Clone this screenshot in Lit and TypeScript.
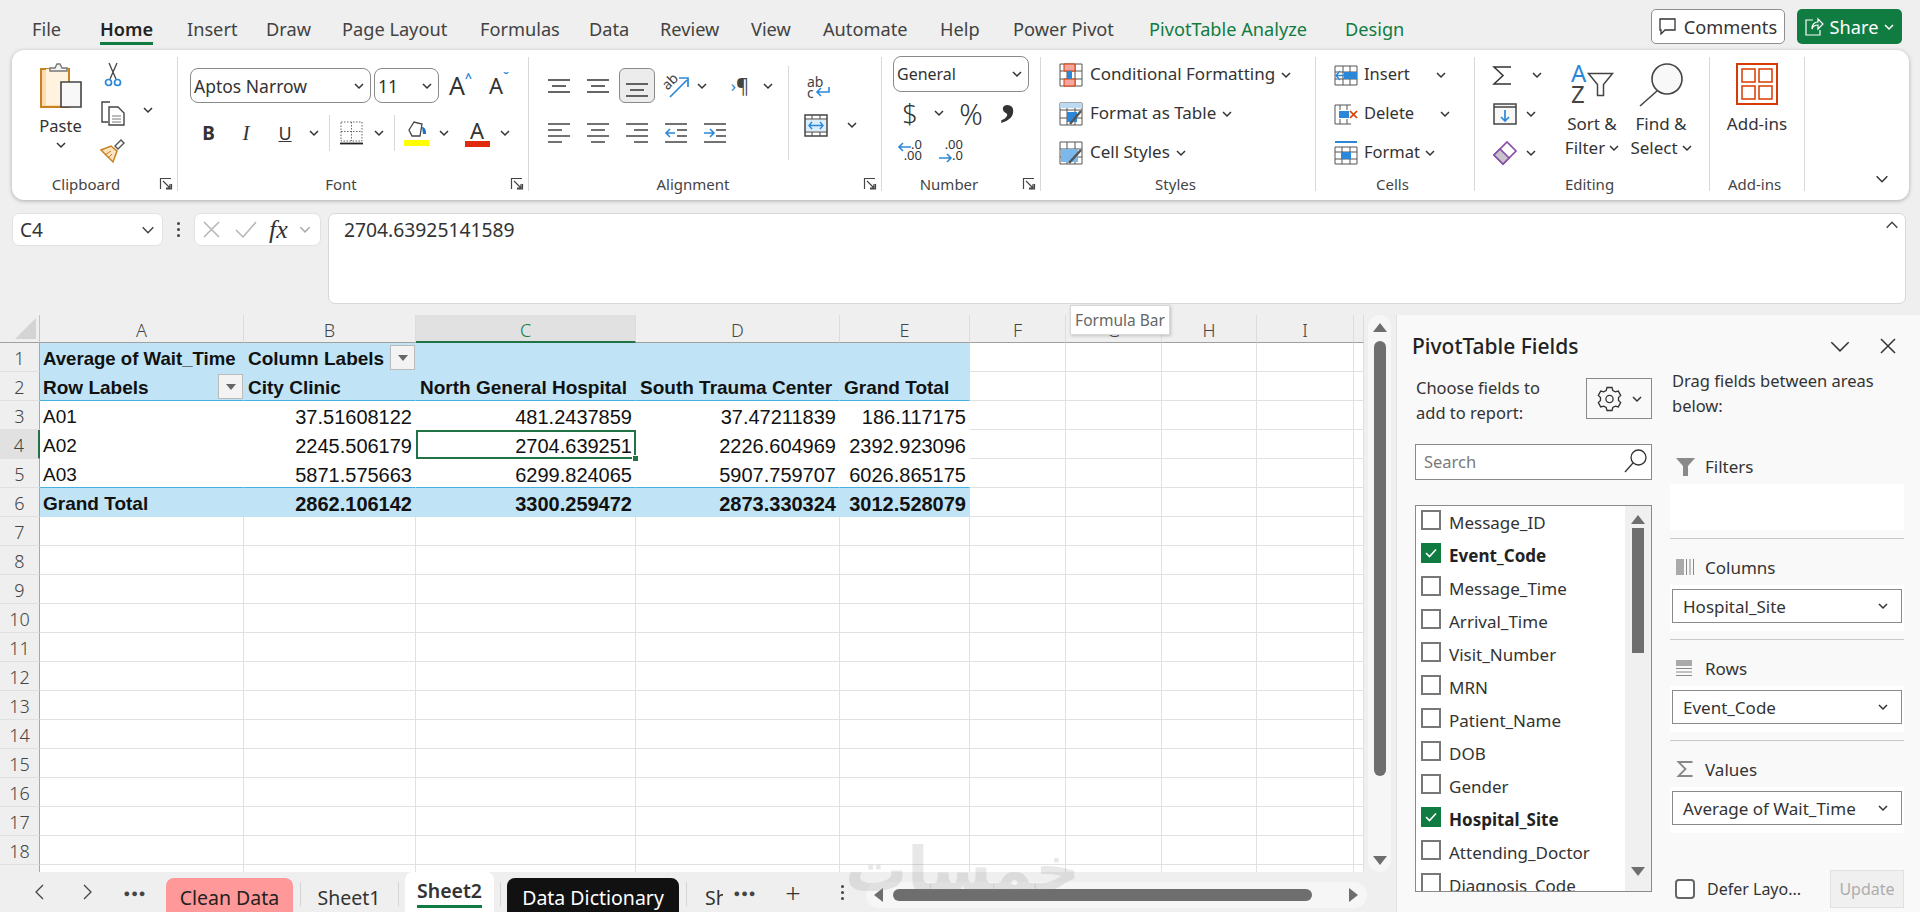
import { LitElement, html, css } from 'lit';
import { customElement } from 'lit/decorators.js';

const chev = (w = 10, color = '#333') =>
  html`<svg class="chev" width=${w} height=${Math.round(w * 0.6)} viewBox="0 0 10 6"><path d="M1 1l4 4 4-4" fill="none" stroke=${color} stroke-width="1.5" vector-effect="non-scaling-stroke"/></svg>`;

const launcher = html`<svg class="launcher" width="12" height="12" viewBox="0 0 12 12"><path d="M.5 11V.5H11M6 11h5.5V6M3 3l7 7M6 10h4V6" fill="none" stroke="#444" stroke-width="1.2"/></svg>`;

const icons = {
  paste: html`<svg width="42" height="46" viewBox="0 0 42 46"><path d="M1 6h28v38H1z" fill="#fddcb0" stroke="#c8811e" stroke-width="2"/><path d="M6 6h22v36H6z" fill="#fff3e0"/><path d="M10 8V5h5l2-4h3l2 4h5v3z" fill="#f4f4f4" stroke="#777" stroke-width="1.4"/><path d="M21 19h20v25H21z" fill="#f8f8f8" stroke="#444" stroke-width="1.6"/></svg>`,
  scissors: html`<svg width="18" height="25" viewBox="0 0 18 25"><path d="M5 1l7 16M13 1L6 17" fill="none" stroke="#444" stroke-width="1.3"/><circle cx="4.500" cy="20.500" r="3" fill="none" stroke="#2b88d8" stroke-width="1.7"/><circle cx="13.500" cy="20.500" r="3" fill="none" stroke="#2b88d8" stroke-width="1.7"/></svg>`,
  copy: html`<svg width="24" height="25" viewBox="0 0 24 25"><path d="M9 1H1v20h6" fill="none" stroke="#444" stroke-width="1.4"/><path d="M8 6h9l6 6v12H8z" fill="#fff" stroke="#444" stroke-width="1.4"/><path d="M11 15h9M11 18h9M11 21h9" stroke="#777"/></svg>`,
  brush: html`<svg width="25" height="24" viewBox="0 0 25 24"><path d="M15 7l6-6 3 3-6 6z" fill="#fff" stroke="#555" stroke-width="1.4"/><path d="M1 11l10-4 6 5-4 11z" fill="#fbe3c2" stroke="#c8811e" stroke-width="1.5"/><path d="M5 16l6-4M8 19l4-4" stroke="#c8811e"/></svg>`,
  borders: html`<svg width="23" height="24" viewBox="0 0 23 24"><path d="M1 1h21v19H1zM11.500 1v19M1 10.500h21" fill="none" stroke="#666" stroke-dasharray="1.500 1.500"/><path d="M0 22.500h23" stroke="#222" stroke-width="1.8"/></svg>`,
  fill: html`<svg width="25" height="26" viewBox="0 0 25 26"><path d="M5 10L10 2l8 2-2 12-8 0z" fill="#fff" stroke="#444" stroke-width="1.3"/><path d="M18 7c3 0 4 3 4 7h-3z" fill="#1b6ec2"/><path d="M0 20h25v6H0z" fill="#ffff00"/></svg>`,
  alignTop: html`<svg width="22" height="14" viewBox="0 0 22 14"><path d="M0 1h22M4 7h14M0 13h22" stroke="#333" stroke-width="1.5"/></svg>`,
  alignC: html`<svg width="22" height="20" viewBox="0 0 22 20"><path d="M0 1h22M4 7h14M0 13h22M4 19h14" stroke="#444" stroke-width="1.500"/></svg>`,
  alignL: html`<svg width="22" height="20" viewBox="0 0 22 20"><path d="M0 1h22M0 7h14M0 13h22M0 19h14" stroke="#444" stroke-width="1.500"/></svg>`,
  alignR: html`<svg width="22" height="20" viewBox="0 0 22 20"><path d="M0 1h22M8 7h14M0 13h22M8 19h14" stroke="#444" stroke-width="1.500"/></svg>`,
  orient: html`<svg width="25" height="26" viewBox="0 0 25 26"><text x="-1" y="13" font-size="14" transform="rotate(-45 7 10)" fill="#444" font-family="Noto Sans">ab</text><path d="M6 24L23 7M15 5h9v9" fill="none" stroke="#2b88d8" stroke-width="1.7"/></svg>`,
  outdent: html`<svg width="22" height="20" viewBox="0 0 22 20"><path d="M0 1h22M12 7h10M12 13h10M0 19h22" stroke="#444" stroke-width="1.500"/><path d="M10 10H1M5 6l-4 4 4 4" fill="none" stroke="#2b88d8" stroke-width="1.600"/></svg>`,
  indent: html`<svg width="22" height="20" viewBox="0 0 22 20"><path d="M0 1h22M12 7h10M12 13h10M0 19h22" stroke="#444" stroke-width="1.500"/><path d="M0 10h9M6 6l4 4-4 4" fill="none" stroke="#2b88d8" stroke-width="1.600"/></svg>`,
  merge: html`<svg width="24" height="23" viewBox="0 0 24 23"><path d="M1 1h22v21H1z" fill="#fff" stroke="#444" stroke-width="1.500"/><path d="M1 5h22M1 18h22M8 1v4M16 1v4M8 18v4M16 18v4" stroke="#444"/><path d="M2 6h20v11H2z" fill="#dbedfb"/><path d="M5 11.500h14M8 8l-3 3.500L8 15M16 8l3 3.500L16 15" fill="none" stroke="#2b88d8" stroke-width="1.400"/></svg>`,
  cf: html`<svg width="24" height="24" viewBox="0 0 24 24"><path d="M1 1h22v22H1zM8 1v22M16 1v22M1 8h22M1 16h22" fill="#fff" stroke="#555"/><path d="M5 1h11v7H5zM5 16h11v7H5z" fill="#f4a6a0" stroke="#d83b01"/><path d="M8 8h5v8H8z" fill="#2b88d8"/></svg>`,
  fat: html`<svg width="24" height="24" viewBox="0 0 24 24"><path d="M1 1h22v22H1zM8 1v22M16 1v22M1 8h22M1 16h22" fill="#fff" stroke="#555"/><path d="M1 1h22v5H1z" fill="#bcd9f2"/><path d="M8 10h10v10H8z" fill="#2b88d8"/><path d="M11 22L22 9" stroke="#555" stroke-width="2.500"/></svg>`,
  cs: html`<svg width="24" height="24" viewBox="0 0 24 24"><path d="M1 1h22v22H1zM8 1v22M16 1v22M1 8h22M1 16h22" fill="#fff" stroke="#555"/><path d="M2 8h17v13H2z" fill="#7cb8ea"/><path d="M10 22L22 9" stroke="#555" stroke-width="2.500"/></svg>`,
  insert: html`<svg width="24" height="21" viewBox="0 0 24 21"><path d="M1 1h22v19H1zM1 7h22M1 14h22M9 1v19M16 1v19" fill="#fff" stroke="#555"/><path d="M10 7h13v7H10z" fill="#2b88d8"/><path d="M12 10.500H2M6 6l-4 4.500L6 15" fill="#fff" stroke="#2b88d8" stroke-width="1.500"/></svg>`,
  del: html`<svg width="24" height="21" viewBox="0 0 24 21"><path d="M1 1h16M1 20h16M1 1v19M6 1v5M13 1v5M6 15v5M13 15v5" fill="none" stroke="#555"/><path d="M5 7h10v7H5z" fill="#2b88d8"/><path d="M16 7l7 7M23 7l-7 7" stroke="#d83b01" stroke-width="1.700"/></svg>`,
  format: html`<svg width="24" height="24" viewBox="0 0 24 24"><path d="M1 1h22" stroke="#2b88d8" stroke-width="2"/><path d="M1 6h22v17H1zM8 6v17M16 6v17M1 11h22M1 18h22" fill="#fff" stroke="#555"/><path d="M7 11h10v7H7z" fill="#2b88d8"/></svg>`,
  sigma: html`<svg width="19" height="19" viewBox="0 0 19 19"><path d="M18 1H1l9 8.500L1 18h17" fill="none" stroke="#333" stroke-width="1.500"/></svg>`,
  filldown: html`<svg width="24" height="22" viewBox="0 0 24 22"><path d="M1 1h22v20H1z" fill="#f8f8f8" stroke="#444" stroke-width="1.500"/><path d="M1 4h22" stroke="#444" stroke-width="1.500"/><path d="M12 7v11M8 14l4 4 4-4" fill="none" stroke="#2b88d8" stroke-width="1.700"/></svg>`,
  eraser: html`<svg width="24" height="24" viewBox="0 0 24 24"><path d="M1 14L14 1l9 9L10 23z" fill="#fff" stroke="#8a4fa8" stroke-width="1.700"/><path d="M1 14l6-6 9 9-6 6z" fill="#c9c4cc" stroke="#8a4fa8" stroke-width="1.700"/></svg>`,
  sort: html`<svg width="43" height="42" viewBox="0 0 43 42"><text x="0" y="19" font-size="24" fill="#2b88d8" font-family="Noto Sans">A</text><text x="0" y="40" font-size="24" fill="#444" font-family="Noto Sans">Z</text><path d="M17.500 10.500h24l-9 11v11h-6v-11z" fill="#fff" stroke="#444" stroke-width="1.500"/></svg>`,
  find: html`<svg width="44" height="44" viewBox="0 0 44 44"><circle cx="28" cy="16" r="15" fill="#f8f8f8" stroke="#444" stroke-width="1.600"/><path d="M18 28L1 43" stroke="#444" stroke-width="1.600"/></svg>`,
  addins: html`<svg width="42" height="42" viewBox="0 0 42 42"><path d="M1 1h40v40H1z" fill="#fff" stroke="#d83b01" stroke-width="2"/><path d="M6 6h13v13H6zM23 6h13v13H23zM6 23h13v13H6zM23 23h13v13H23z" fill="none" stroke="#d83b01" stroke-width="1.500"/></svg>`,
  comment: html`<svg width="17" height="18" viewBox="0 0 17 18"><path d="M1 1h15v11H6l-4 4v-4H1z" fill="none" stroke="#333" stroke-width="1.300"/></svg>`,
  share: html`<svg width="19" height="19" viewBox="0 0 19 19"><path d="M8 3H1v15h14v-5M7 12c0-5 3-7 6-7V2l5 5-5 5V8c-3 0-5 1-6 4z" fill="none" stroke="#fff" stroke-width="1.200"/></svg>`,
  gear: html`<svg width="25" height="25" viewBox="0 0 25 25"><path d="M10 1.500h5l.8 3 2.500 1.400 3-.8 2.400 4.300-2.200 2.200v2.800l2.200 2.200-2.400 4.300-3-.8-2.500 1.400-.8 3h-5l-.8-3-2.500-1.400-3 .8L1.300 16.600l2.200-2.200v-2.800L1.300 9.400l2.400-4.300 3 .8 2.500-1.400z" fill="none" stroke="#333" stroke-width="1.300"/><circle cx="12.500" cy="13" r="3.600" fill="none" stroke="#333" stroke-width="1.300"/></svg>`,
  search: html`<svg width="23" height="24" viewBox="0 0 23 24"><circle cx="14.500" cy="8.500" r="7.500" fill="none" stroke="#333" stroke-width="1.300"/><path d="M9 14L1 23" stroke="#333" stroke-width="1.300"/></svg>`,
  funnel: html`<svg width="19" height="18" viewBox="0 0 19 18"><path d="M0 0h19l-7 8v10H7V8z" fill="#8a8a8a"/></svg>`,
  cols: html`<svg width="19" height="16" viewBox="0 0 19 16"><path d="M0 0h8v16H0z" fill="#aaa"/><path d="M10.500 0v16M14 0v16M17.500 0v16" stroke="#888"/></svg>`,
  rows: html`<svg width="19" height="16" viewBox="0 0 19 16"><path d="M0 0h16v6H0z" fill="#aaa"/><path d="M0 8.500h16M0 12h16M0 15.500h16" stroke="#888"/></svg>`,
  sum: html`<svg width="16" height="16" viewBox="0 0 16 16"><path d="M15 1H1l7 7-7 7h14" fill="none" stroke="#888" stroke-width="1.800"/></svg>`,
  check: html`<svg width="12" height="10" viewBox="0 0 12 10"><path d="M1 5l3.500 3.500L11 1.500" fill="none" stroke="#fff" stroke-width="1.600"/></svg>`,
  x: html`<svg width="17" height="17" viewBox="0 0 17 17"><path d="M1 1l15 15M16 1L1 16" stroke="#b5b5b5" stroke-width="1.500"/></svg>`,
  tick: html`<svg width="22" height="17" viewBox="0 0 22 17"><path d="M1 9l7 7L21 1" fill="none" stroke="#b5b5b5" stroke-width="1.500"/></svg>`,
  close: html`<svg width="16" height="16" viewBox="0 0 16 16"><path d="M1 1l14 14M15 1L1 15" stroke="#333" stroke-width="1.500"/></svg>`,
};

const tabs = ['File', 'Home', 'Insert', 'Draw', 'Page Layout', 'Formulas', 'Data', 'Review', 'View', 'Automate', 'Help', 'Power Pivot', 'PivotTable Analyze', 'Design'];
const colNames = ['A', 'B', 'C', 'D', 'E', 'F', 'G', 'H', 'I', ''];
const pivot: string[][] = [
  ['Average of Wait_Time', 'Column Labels', '', '', ''],
  ['Row Labels', 'City Clinic', 'North General Hospital', 'South Trauma Center', 'Grand Total'],
  ['A01', '37.51608122', '481.2437859', '37.47211839', '186.117175'],
  ['A02', '2245.506179', '2704.639251', '2226.604969', '2392.923096'],
  ['A03', '5871.575663', '6299.824065', '5907.759707', '6026.865175'],
  ['Grand Total', '2862.106142', '3300.259472', '2873.330324', '3012.528079'],
];
const fields = [
  ['Message_ID', 0], ['Event_Code', 1], ['Message_Time', 0], ['Arrival_Time', 0], ['Visit_Number', 0], ['MRN', 0],
  ['Patient_Name', 0], ['DOB', 0], ['Gender', 0], ['Hospital_Site', 1], ['Attending_Doctor', 0], ['Diagnosis_Code', 0],
] as const;

@customElement('app-root')
export class AppRoot extends LitElement {
  static styles = css`
    :host { display: block; width: 1920px; height: 912px; overflow: hidden; background: #efefef; font-family: 'Noto Sans', sans-serif; color: #333; font-size: 16px; }
    * { box-sizing: border-box; }
    svg { display: block; flex: none; overflow: visible; }
    .chev { flex: none; }

    .tabbar { height: 50px; display: flex; align-items: flex-start; padding-right: 18px; }
    .tabs { flex: 1; display: grid; padding: 16px 0 0 32px; grid-template-columns: 68px 87px 79px 76px 138px 109px 71px 91px 72px 117px 73px 136px 196px auto; font-size: 18.200px; line-height: 26px; color: #424242; white-space: nowrap; }
    .tab-on span { display: inline-block; font-weight: 600; color: #222; border-bottom: 3px solid #107c41; height: 29px; }
    .tab-green { color: #107c41; }
    .comments { margin-top: 9px; width: 134px; height: 35px; background: #fff; border: 1px solid #8f8f8f; border-radius: 5px; display: flex; align-items: center; justify-content: center; gap: 8px; font-size: 18.200px; }
    .share { margin: 9px 0 0 12px; width: 105px; height: 35px; background: #107c41; color: #fff; border-radius: 5px; display: flex; align-items: center; justify-content: center; gap: 6px; font-size: 18.200px; }

    .ribbon { height: 150px; margin: 0 11px 0 12px; padding-top: 7px; background: #fff; border-radius: 12px; box-shadow: 0 1px 4px rgba(0,0,0,.28); display: flex; font-size: 17px; }
    .group { height: 134px; display: flex; flex-direction: column; border-right: 1px solid #d8d8d8; flex: none; }
    .g-clip { width: 166px; } .g-font { width: 351px; } .g-align { width: 353px; } .g-num { width: 159px; }
    .g-styles { width: 275px; } .g-cells { width: 159px; font-size: 16.500px; } .g-edit { width: 235px; } .g-add { width: 95px; }
    .body { flex: 1; min-height: 0; }
    .label { height: 14px; line-height: 14px; display: flex; align-items: center; font-size: 15px; color: #444; padding-right: 5px; }
    .label span { flex: 1; text-align: center; white-space: nowrap; }
    .g-font .label span, .g-align .label span, .g-num .label span { padding-right: 7px; }

    .cell-c { display: flex; align-items: center; justify-content: center; min-width: 0; }
    .clip-body { display: flex; padding-left: 9px; }
    .paste { width: 79px; display: flex; flex-direction: column; align-items: center; padding-top: 6px; font-size: 16.500px; }
    .paste-t { margin-top: 6px; line-height: 22px; }
    .paste .chev { margin-top: 5px; }
    .clip-col { width: 24px; display: grid; grid-template-rows: 34px 44px 32px; place-items: center; }
    .clip-chev { display: flex; padding-top: 50px; margin-left: 19px; }

    .font-body { padding: 11px 0 0 12px; }
    .font-r1 { display: flex; align-items: center; height: 35px; }
    .sel { height: 35px; border: 1px solid #8a8a8a; border-radius: 8px; display: flex; align-items: center; justify-content: space-between; padding: 0 6px 0 3px; font-size: 17.500px; background: #fff; }
    .sel-font { width: 181px; } .sel-size { width: 65px; margin-left: 3px; }
    .grow { font-size: 25px; line-height: 35px; display: flex; align-items: flex-start; color: #333; }
    .grow i { font-style: normal; font-size: 12px; line-height: 20px; color: #2b88d8; font-weight: 700; }
    .grow1 { margin-left: 10px; width: 40px; } .grow2 { font-size: 22px; width: 30px; }
    .font-r2 { margin-top: 12px; height: 36px; display: grid; grid-template-columns: 37px 38px 40px 18px 12px 32px 24px 6px 38px 18px 48px 8px; }
    .fb { font-weight: 700; font-size: 19px; } .fi { font-style: italic; font-family: 'Liberation Serif', serif; font-size: 21px; } .fu { text-decoration: underline; font-size: 18px; }
    .vsep { width: 1px; height: 36px; background: #d8d8d8; justify-self: center; }
    .font-a { flex-direction: column; font-size: 22px; line-height: 20px; }
    .font-a i { display: block; width: 25px; height: 6px; background: #e02b0c; margin-top: 1px; }

    .al-body { display: flex; padding-top: 11px; }
    .al-left { width: 259px; padding-left: 10px; }
    .al-r1 { height: 35px; display: grid; grid-template-columns: 40px 38px 40px 38px 14px 18px 26px 30px; }
    .al-r2 { margin-top: 12px; height: 36px; display: grid; grid-template-columns: 40px 38px 40px 38px 40px; }
    .al-on { width: 36px; height: 35px; border: 1px solid #8a8a8a; border-radius: 6px; background: #ececec; display: flex; align-items: center; justify-content: center; padding-top: 8px; }
    .pil { display: flex; align-items: center; font-size: 20px; color: #444; }
    .pil b { color: #2b88d8; font-weight: 400; font-size: 17px; }
    .al-right { margin-top: -2px; width: 92px; height: 94px; border-left: 1px solid #d8d8d8; padding: 10px 0 0 18px; }
    .wrap { width: 24px; height: 24px; font-size: 14px; line-height: 11px; color: #444; position: relative; }
    .wrap svg { position: absolute; left: 8px; top: 11px; }
    .merge-row { display: flex; align-items: center; margin-top: 11px; margin-left: -3px; gap: 19px; height: 28px; }

    .num-body { padding-left: 11px; margin-top: -1px; }
    .sel-num { width: 136px; height: 36px; font-size: 16px; }
    .num-r2 { height: 42px; display: grid; grid-template-columns: 34px 24px 40px 40px; font-size: 27px; font-weight: 300; color: #333; }
    .num-pct { font-size: 29px; }
    .num-comma { font-family: 'Liberation Serif', serif; font-weight: 700; font-size: 60px; line-height: 42px; height: 42px; transform: translate(-3px, -19px); }
    .num-r3 { height: 32px; display: grid; grid-template-columns: 34px 48px; }
    .dec { font-size: 13px; line-height: 11px; color: #333; text-align: right; position: relative; width: 24px; }
    .dec svg { position: absolute; left: 0; }
    .dec-a { top: 3px; } .dec-b { top: 14px; }

    .stack { display: grid; grid-template-rows: 36px 42px 36px; }
    .stack-row { display: flex; align-items: center; white-space: nowrap; }
    .g-styles .stack-row, .g-cells .stack-row { line-height: 22px; padding-bottom: 0; }
    .g-styles .stack { padding-left: 18px; }
    .g-styles .stack-row svg:first-child { margin-right: 7px; }
    .g-styles .chev { margin-left: 6px; }
    .g-cells .stack { padding-left: 18px; }
    .g-cells .stack-row svg:first-child { margin-right: 6px; }
    .row-t { margin-top: -2px; }
    .ins-c { margin-left: 26px; } .del-c { margin-left: 26px; } .fmt-c { margin-left: 5px; }

    .edit-body { display: flex; }
    .edit-l { width: 82px; padding-left: 18px; }
    .edit-c1 { margin-left: 20px; } .edit-c2 { margin-left: 9px; }
    .big { display: flex; flex-direction: column; align-items: center; padding-top: 6px; line-height: 24px; }
    .big-icon { height: 49px; }
    .big-line { display: flex; align-items: center; gap: 4px; white-space: nowrap; }
    .sort { width: 70px; } .find { width: 68px; }
    .rib-end { flex: 1; display: flex; justify-content: flex-end; align-items: flex-end; height: 134px; padding: 0 20px 8px 0; }

    .fbar { height: 91px; margin-top: 13px; padding: 0 14px 0 12px; display: flex; align-items: flex-start; }
    .namebox { width: 151px; height: 33px; background: #fff; border: 1px solid #e2e2e2; border-radius: 7px; display: flex; align-items: center; justify-content: space-between; padding: 0 7px; font-size: 19px; }
    .dots { width: 31px; height: 33px; display: flex; flex-direction: column; align-items: center; justify-content: center; gap: 3px; }
    .dots i { width: 3px; height: 3px; background: #444; border-radius: 50%; }
    .fxbox { width: 127px; height: 33px; background: #fff; border: 1px solid #e2e2e2; border-radius: 7px; display: flex; align-items: center; padding-left: 8px; }
    .fxbox svg:nth-child(2) { margin-left: 15px; }
    .fx { margin-left: 12px; font: italic 26px 'Liberation Serif', serif; color: #333; width: 30px; }
    .fml { flex: 1; height: 91px; margin-left: 7px; background: #fff; border: 1px solid #d8d8d8; border-radius: 7px; padding: 3px 6px 0 15px; display: flex; justify-content: space-between; font-size: 19.300px; line-height: 26px; }
    .fml svg { margin-top: 4px; transform: scaleY(-1); }

    .main { height: 597px; margin-top: 11px; display: flex; }
    .sheet { width: 1396px; position: relative; flex: none; }
    .sheet-top { height: 557px; display: flex; }
    .grid { width: 1364px; height: 557px; overflow: hidden; display: grid; grid-template-columns: 40px 204px 172px 220px 204px 130px 96px 96px 95px 97px 10px; grid-auto-rows: 29px; grid-template-rows: 28px; font: 19px 'Liberation Sans', sans-serif; color: #111; }
    .corner { border-right: 1px solid #c4c4c4; border-bottom: 1px solid #a0a0a0; display: flex; align-items: flex-end; justify-content: flex-end; padding: 0 3px 3px 0; }
    .ch { border-bottom: 1px solid #a0a0a0; border-right: 1px solid #dcdcdc; display: flex; align-items: center; justify-content: center; font: 300 18px 'Noto Sans', sans-serif; color: #444; padding-top: 3px; }
    .ch-on { background: #e1e1e1; color: #107c41; border-bottom: 2px solid #217346; }
    .rh { background: #efefef; border-right: 1px solid #a8a8a8; border-bottom: 1px solid #e0e0e0; display: flex; align-items: center; justify-content: center; font: 300 18px 'Noto Sans', sans-serif; color: #444; padding-top: 2px; }
    .rh-on { background: #e1e1e1; border-right: 2px solid #217346; }
    .c { background: #fff; border-right: 1px solid #e1e1e1; border-bottom: 1px solid #e1e1e1; white-space: nowrap; line-height: 32px; padding: 0 3px 0 4px; position: relative; }
    .c-first { padding-left: 3px; }
    .pv { border-color: transparent; }
    .hd { background: #c0e4f5; font-weight: 700; border-color: #c0e4f5; }
    .r { text-align: right; }
    .num { font-size: 20px; }
    .hd-line { border-bottom-color: #45b0e1; }
    .tot { background: #c0e4f5; font-weight: 700; border-color: #c0e4f5; border-top: 1px solid #45b0e1; margin-top: -1px; }
    .narrow { font-size: 18.600px; }
    .c-sel { outline: 2px solid #217346; outline-offset: -2px; }
    .c-sel i { position: absolute; right: -4px; bottom: -4px; width: 7px; height: 7px; background: #217346; border: 1px solid #fff; z-index: 2; }
    .ddb { position: absolute; right: 0; top: 2px; width: 25px; height: 25px; background: #f3f3f3; border: 1px solid #bbb; display: flex; align-items: center; justify-content: center; }
    .ddb::after { content: ''; border: 5px solid transparent; border-top: 6px solid #666; border-bottom: 0; }
    .tip { position: absolute; left: 1070px; top: -10px; width: 100px; height: 30px; background: #fff; border: 1px solid #d8d8d8; box-shadow: 1px 1px 3px rgba(0,0,0,.2); font-size: 15.500px; line-height: 28px; text-align: center; color: #666; white-space: nowrap; z-index: 3; }
    .vscroll { margin-left: 4px; width: 23px; height: 557px; background: #f6f6f6; border-radius: 12px; display: flex; flex-direction: column; align-items: center; padding-top: 8px; }
    .up { width: 0; height: 0; border: 7px solid transparent; border-bottom: 9px solid #6e6e6e; border-top: 0; }
    .down { width: 0; height: 0; border: 7px solid transparent; border-top: 9px solid #6e6e6e; border-bottom: 0; }
    .vthumb { width: 12px; height: 435px; margin: 9px 0 80px; background: #6e6e6e; border-radius: 6px; }

    .sbar { height: 40px; display: flex; align-items: flex-end; }
    .nav { width: 166px; height: 40px; padding: 0 0 0 22px; display: grid; grid-template-columns: 34px 34px 34px; column-gap: 14px; place-items: center; }
    .more { font-size: 11px; letter-spacing: 1px; color: #444; line-height: 1; }
    .st { height: 34px; display: flex; align-items: center; justify-content: center; font-size: 19.500px; white-space: nowrap; flex: none; padding-top: 4px; }
    .st-pink { width: 127px; background: #ff9999; border-radius: 8px 8px 0 0; color: #222; }
    .st-plain { width: 84px; }
    .st-active { width: 89px; height: 40px; background: #fff; border-radius: 8px 8px 0 0; flex-direction: column; padding-top: 2px; font-weight: 600; }
    .st-active u { text-decoration: none; border-bottom: 3px solid #107c41; padding-bottom: 1px; line-height: 26px; }
    .st-black { width: 172px; background: #111; color: #fff; border-radius: 8px 8px 0 0; }
    .st-clip { width: 30px; justify-content: flex-start; padding-left: 12px; overflow: hidden; }
    .ssep { width: 14px; height: 40px; display: flex; align-items: center; justify-content: center; flex: none; }
    .ssep-s { width: 13px; }
    .ssep::after { content: ''; width: 1px; height: 24px; background: #d4d4d4; margin-top: 4px; }
    .bbtn { width: 34px; height: 40px; display: flex; align-items: center; justify-content: center; flex: none; }
    .b1 { margin-left: 5px; } .b2 { margin-left: 14px; font-size: 27px; font-weight: 300; } .b3 { margin-left: 15px; flex-direction: column; gap: 3px; }
    .b3 i { width: 3px; height: 3px; background: #444; border-radius: 50%; }
    .hscroll { margin: 0 0 4px 7px; width: 501px; height: 26px; border-radius: 13px; background: #f6f6f6; display: flex; align-items: center; padding: 0 8px; }
    .left { width: 0; height: 0; border: 7px solid transparent; border-right: 9px solid #6e6e6e; border-left: 0; }
    .right { width: 0; height: 0; border: 7px solid transparent; border-left: 9px solid #6e6e6e; border-right: 0; margin-left: 37px; }
    .hthumb { width: 419px; height: 12px; background: #6e6e6e; border-radius: 6px; margin-left: 10px; }
    .wm { position: absolute; left: 845px; top: 520px; font: 700 62px 'DejaVu Sans', sans-serif; color: rgba(130,130,130,.18); white-space: nowrap; line-height: 70px; z-index: 2; pointer-events: none; }

    .panel { flex: 1; background: #f9f9f9; border-left: 1px solid #e2e2e2; padding: 16px 16px 0 18px; font-size: 17px; color: #333; }
    .p-title { height: 30px; display: flex; align-items: center; font-size: 21px; font-weight: 500; color: #222; margin-left: -3px; }
    .p-title span { flex: 1; }
    .p-title .chev { margin-right: 29px; }
    .p-title .close { flex: none; margin-right: 8px; }
    .p-cols { display: flex; }
    .p-left { width: 237px; }
    .choose { height: 83px; padding-top: 14px; display: flex; justify-content: space-between; line-height: 25px; padding-left: 1px; font-size: 16.500px; }
    .gear { width: 66px; height: 41px; margin-top: 3px; border: 1px solid #8a8a8a; display: flex; align-items: center; justify-content: center; gap: 10px; }
    .search { height: 36px; background: #fff; border: 1px solid #8a8a8a; display: flex; align-items: center; justify-content: space-between; padding: 0 4px 2px 8px; color: #7a7a7a; font-size: 16.500px; }
    .list { margin-top: 25px; height: 387px; background: #fff; border: 1px solid #8a8a8a; overflow: hidden; display: flex; }
    .items { flex: 1; }
    .item { height: 33px; display: flex; align-items: center; padding-left: 5px; gap: 8px; white-space: nowrap; }
    .box { width: 20px; height: 20px; border: 2px solid #777; background: #fff; flex: none; margin-top: -6px; }
    .box-on { background: #107c41; border-color: #107c41; display: flex; align-items: center; justify-content: center; }
    .item b { font-weight: 700; color: #222; }
    .lscroll { width: 26px; background: #f0f0f0; display: flex; flex-direction: column; align-items: center; padding-top: 9px; }
    .lthumb { width: 12px; height: 125px; margin: 4px 0 214px; background: #6e6e6e; }
    .p-right { width: 234px; margin-left: 18px; }
    .drag { height: 89px; padding: 7px 0 0 2px; line-height: 25px; font-size: 16.500px; white-space: nowrap; }
    .area { border-bottom: 1px solid #c8c8c8; padding-bottom: 8px; }
    .area-last { border-bottom: 0; padding-bottom: 0; }
    .area-h { height: 46px; padding: 11px 0 1px 6px; display: flex; align-items: center; gap: 10px; }
    .area-h svg { width: 19px; }
    .area-first { height: 34px; padding-top: 0; }
    .area-b { height: 46px; background: #fff; padding: 4px 2px; }
    .drop { height: 34px; border: 1px solid #8a8a8a; background: #fff; display: flex; align-items: center; justify-content: space-between; padding: 0 13px 0 10px; white-space: nowrap; }
    .defer { margin-top: 37px; height: 38px; display: flex; align-items: center; font-size: 16px; }
    .dbox { width: 20px; height: 20px; margin-left: 5px; background: #fff; border: 2px solid #666; border-radius: 4px; flex: none; }
    .dtxt { margin-left: 12px; flex: 1; white-space: nowrap; }
    .upd { width: 74px; height: 38px; background: #f0f0f0; border: 1px solid #e0e0e0; color: #adadad; display: flex; align-items: center; justify-content: center; }
  `;

  private renderCell(row: number, col: number) {
    if (row >= 6 || col >= 5) return html`<div class="c"></div>`;
    const v = pivot[row][col];
    const cls = ['c', 'pv'];
    if (col === 0) cls.push('c-first');
    if (row === 0 && col === 0) cls.push('narrow');
    if (row < 2) cls.push('hd');
    if (row === 1) cls.push('hd-line');
    if (row === 5) cls.push('tot');
    if (row >= 2 && col > 0) cls.push('r', 'num');
    if (row === 3 && col === 2) cls.push('c-sel');
    const hasBtn = (row === 0 && col === 1) || (row === 1 && col === 0);
    return html`<div class=${cls.join(' ')}>${v}${hasBtn ? html`<span class="ddb"></span>` : ''}${row === 3 && col === 2 ? html`<i></i>` : ''}</div>`;
  }

  private renderGrid() {
    const rows = Array.from({ length: 19 }, (_, r) => r);
    return html`<div class="grid">
      <div class="corner"><svg width="21" height="21" viewBox="0 0 21 21"><path d="M21 0v21H0z" fill="#d4d4d4"/></svg></div>
      ${colNames.map((n) => html`<div class="ch ${n === 'C' ? 'ch-on' : ''}">${n}</div>`)}
      ${rows.map((r) => html`
        <div class="rh ${r === 3 ? 'rh-on' : ''}">${r < 18 ? r + 1 : ''}</div>
        ${colNames.map((_, c) => this.renderCell(r, c))}
      `)}
    </div>`;
  }

  private renderRibbon() {
    return html`<div class="ribbon">
      <div class="group g-clip">
        <div class="body clip-body">
          <div class="paste">${icons.paste}<div class="paste-t">Paste</div>${chev()}</div>
          <div class="clip-col"><span>${icons.scissors}</span><span>${icons.copy}</span><span>${icons.brush}</span></div>
          <div class="clip-chev">${chev()}</div>
        </div>
        <div class="label"><span>Clipboard</span>${launcher}</div>
      </div>

      <div class="group g-font">
        <div class="body font-body">
          <div class="font-r1">
            <div class="sel sel-font">Aptos Narrow ${chev()}</div>
            <div class="sel sel-size">11 ${chev()}</div>
            <div class="grow grow1">A<i>^</i></div>
            <div class="grow grow2">A<i>ˇ</i></div>
          </div>
          <div class="font-r2">
            <div class="cell-c fb">B</div><div class="cell-c fi">I</div><div class="cell-c fu">U</div><div class="cell-c">${chev()}</div>
            <div class="vsep"></div>
            <div class="cell-c">${icons.borders}</div><div class="cell-c">${chev()}</div>
            <div class="vsep"></div>
            <div class="cell-c">${icons.fill}</div><div class="cell-c">${chev()}</div>
            <div class="cell-c font-a">A<i></i></div><div class="cell-c">${chev()}</div>
          </div>
        </div>
        <div class="label"><span>Font</span>${launcher}</div>
      </div>

      <div class="group g-align">
        <div class="body al-body">
          <div class="al-left">
            <div class="al-r1">
              <div class="cell-c">${icons.alignTop}</div>
              <div class="cell-c">${icons.alignTop}</div>
              <div class="cell-c"><div class="al-on">${icons.alignTop}</div></div>
              <div class="cell-c">${icons.orient}</div>
              <div class="cell-c">${chev()}</div><div></div>
              <div class="cell-c pil"><b>›</b>¶</div>
              <div class="cell-c">${chev()}</div>
            </div>
            <div class="al-r2">
              <div class="cell-c">${icons.alignL}</div>
              <div class="cell-c">${icons.alignC}</div>
              <div class="cell-c">${icons.alignR}</div>
              <div class="cell-c">${icons.outdent}</div>
              <div class="cell-c">${icons.indent}</div>
            </div>
          </div>
          <div class="al-right">
            <div class="wrap">ab<br />c<svg width="16" height="12" viewBox="0 0 16 12"><path d="M14 0v5H2M6 1L2 5l4 4" fill="none" stroke="#2b88d8" stroke-width="1.600"/></svg></div>
            <div class="merge-row">${icons.merge}${chev()}</div>
          </div>
        </div>
        <div class="label"><span>Alignment</span>${launcher}</div>
      </div>

      <div class="group g-num">
        <div class="body num-body">
          <div class="sel sel-num">General ${chev()}</div>
          <div class="num-r2">
            <div class="cell-c">$</div><div class="cell-c">${chev()}</div><div class="cell-c num-pct">%</div><div class="cell-c num-comma">,</div>
          </div>
          <div class="num-r3">
            <div class="cell-c"><div class="dec"><svg class="dec-a" width="13" height="10" viewBox="0 0 13 10"><path d="M13 5H1M5 1L1 5l4 4" fill="none" stroke="#2b88d8" stroke-width="1.600"/></svg>.0<br />.00</div></div>
            <div class="cell-c"><div class="dec">.00<br />.0<svg class="dec-b" width="13" height="10" viewBox="0 0 13 10"><path d="M0 5h12M8 1l4 4-4 4" fill="none" stroke="#2b88d8" stroke-width="1.600"/></svg></div></div>
          </div>
        </div>
        <div class="label"><span>Number</span>${launcher}</div>
      </div>

      <div class="group g-styles">
        <div class="body stack">
          <div class="stack-row">${icons.cf}<span class="row-t">Conditional Formatting</span>${chev()}</div>
          <div class="stack-row">${icons.fat}<span class="row-t">Format as Table</span>${chev()}</div>
          <div class="stack-row">${icons.cs}<span class="row-t">Cell Styles</span>${chev()}</div>
        </div>
        <div class="label"><span>Styles</span></div>
      </div>

      <div class="group g-cells">
        <div class="body stack">
          <div class="stack-row">${icons.insert}<span class="row-t">Insert</span><span class="ins-c">${chev()}</span></div>
          <div class="stack-row">${icons.del}<span class="row-t">Delete</span><span class="del-c">${chev()}</span></div>
          <div class="stack-row">${icons.format}<span class="row-t">Format</span><span class="fmt-c">${chev()}</span></div>
        </div>
        <div class="label"><span>Cells</span></div>
      </div>

      <div class="group g-edit">
        <div class="body edit-body">
          <div class="edit-l stack">
            <div class="stack-row">${icons.sigma}<span class="edit-c1">${chev()}</span></div>
            <div class="stack-row">${icons.filldown}<span class="edit-c2">${chev()}</span></div>
            <div class="stack-row">${icons.eraser}<span class="edit-c2">${chev()}</span></div>
          </div>
          <div class="big sort"><div class="big-icon">${icons.sort}</div><div class="big-line">Sort &amp;</div><div class="big-line">Filter ${chev()}</div></div>
          <div class="big find"><div class="big-icon">${icons.find}</div><div class="big-line">Find &amp;</div><div class="big-line">Select ${chev()}</div></div>
        </div>
        <div class="label"><span>Editing</span></div>
      </div>

      <div class="group g-add">
        <div class="body big"><div class="big-icon">${icons.addins}</div><div class="big-line">Add-ins</div></div>
        <div class="label"><span>Add-ins</span></div>
      </div>

      <div class="rib-end">${chev(14)}</div>
    </div>`;
  }

  private renderPanel() {
    const area = (icon: unknown, name: string, value: string, last = false) => html`<div class="area ${last ? 'area-last' : ''}">
      <div class="area-h">${icon}<span>${name}</span></div>
      <div class="area-b"><div class="drop">${value}${chev()}</div></div>
    </div>`;
    return html`<div class="panel">
      <div class="p-title"><span>PivotTable Fields</span>${chev(22)}<div class="close">${icons.close}</div></div>
      <div class="p-cols">
        <div class="p-left">
          <div class="choose"><div>Choose fields to<br />add to report:</div><div class="gear">${icons.gear}${chev()}</div></div>
          <div class="search">Search${icons.search}</div>
          <div class="list">
            <div class="items">
              ${fields.map(([name, on]) => html`<div class="item">
                ${on ? html`<span class="box box-on">${icons.check}</span><b>${name}</b>` : html`<span class="box"></span>${name}`}
              </div>`)}
            </div>
            <div class="lscroll"><div class="up"></div><div class="lthumb"></div><div class="down"></div></div>
          </div>
        </div>
        <div class="p-right">
          <div class="drag">Drag fields between areas<br />below:</div>
          <div class="area">
            <div class="area-h area-first">${icons.funnel}<span>Filters</span></div>
            <div class="area-b"></div>
          </div>
          ${area(icons.cols, 'Columns', 'Hospital_Site')}
          ${area(icons.rows, 'Rows', 'Event_Code')}
          ${area(icons.sum, 'Values', 'Average of Wait_Time', true)}
          <div class="defer"><span class="dbox"></span><span class="dtxt">Defer Layo...</span><div class="upd">Update</div></div>
        </div>
      </div>
    </div>`;
  }

  render() {
    return html`
      <div class="tabbar">
        <div class="tabs">
          ${tabs.map((t) => html`<div class="${t === 'Home' ? 'tab-on' : ''} ${t === 'PivotTable Analyze' || t === 'Design' ? 'tab-green' : ''}"><span>${t}</span></div>`)}
        </div>
        <div class="comments">${icons.comment}Comments</div>
        <div class="share">${icons.share}Share ${chev(10, '#fff')}</div>
      </div>
      ${this.renderRibbon()}
      <div class="fbar">
        <div class="namebox">C4 ${chev(14, '#444')}</div>
        <div class="dots"><i></i><i></i><i></i></div>
        <div class="fxbox">${icons.x}${icons.tick}<span class="fx">fx</span>${chev(12, '#aaa')}</div>
        <div class="fml">2704.63925141589 ${chev(14, '#444')}</div>
      </div>
      <div class="main">
        <div class="sheet">
          <div class="tip">Formula Bar</div>
          <div class="sheet-top">
            ${this.renderGrid()}
            <div class="vscroll"><div class="up"></div><div class="vthumb"></div><div class="down"></div></div>
          </div>
          <div class="sbar">
            <div class="nav">
              <svg width="9" height="16" viewBox="0 0 9 16"><path d="M8 1L1 8l7 7" fill="none" stroke="#444" stroke-width="1.300"/></svg>
              <svg width="9" height="16" viewBox="0 0 9 16"><path d="M1 1l7 7-7 7" fill="none" stroke="#444" stroke-width="1.300"/></svg>
              <span class="more">●●●</span>
            </div>
            <div class="st st-pink">Clean Data</div><div class="ssep"></div>
            <div class="st st-plain">Sheet1</div><div class="ssep"></div>
            <div class="st st-active"><u>Sheet2</u></div><div class="ssep ssep-s"></div>
            <div class="st st-black">Data Dictionary</div><div class="ssep"></div>
            <div class="st st-clip">Sheet3</div>
            <div class="bbtn b1"><span class="more">●●●</span></div>
            <div class="bbtn b2">+</div>
            <div class="bbtn b3"><i></i><i></i><i></i></div>
            <div class="hscroll"><div class="left"></div><div class="hthumb"></div><div class="right"></div></div>
          </div>
          <div class="wm" dir="rtl" lang="ar">خمسات</div>
        </div>
        ${this.renderPanel()}
      </div>
    `;
  }
}

declare global {
  interface HTMLElementTagNameMap {
    'app-root': AppRoot;
  }
}
